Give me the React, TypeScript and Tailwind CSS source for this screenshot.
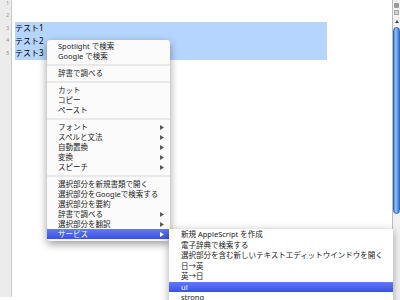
const lines = ['', '', 'テスト1', 'テスト2', 'テスト3'];

type Item = { label: string; arrow?: boolean; active?: boolean } | 'sep';

const menu: Item[] = [
  { label: 'Spotlight で検索' },
  { label: 'Google で検索' },
  'sep',
  { label: '辞書で調べる' },
  'sep',
  { label: 'カット' },
  { label: 'コピー' },
  { label: 'ペースト' },
  'sep',
  { label: 'フォント', arrow: true },
  { label: 'スペルと文法', arrow: true },
  { label: '自動置換', arrow: true },
  { label: '変換', arrow: true },
  { label: 'スピーチ', arrow: true },
  'sep',
  { label: '選択部分を新規書類で開く' },
  { label: '選択部分をGoogleで検索する' },
  { label: '選択部分を要約' },
  { label: '辞書で調べる', arrow: true },
  { label: '選択部分を翻訳', arrow: true },
  { label: 'サービス', arrow: true, active: true },
];

const services = [
  { label: '新規 AppleScript を作成' },
  { label: '電子辞典で検索する' },
  { label: '選択部分を含む新しいテキストエディットウインドウを開く' },
  { label: '日→英' },
  { label: '英→日' },
  { label: 'ul', active: true },
  { label: 'strong' },
];

function Arrow({ white }: { white?: boolean }) {
  return (
    <svg width="4" height="5" viewBox="0 0 4 5" className="shrink-0">
      <polygon points="0,0 4,2.5 0,5" fill={white ? '#ffffff' : '#5a5a5a'} />
    </svg>
  );
}

function ContextMenu() {
  return (
    <div className="absolute left-[47px] top-[40px] w-[123px] pt-[1px] pb-[2px] bg-[#fbfbfb] rounded-[3px] shadow-[0_3px_9px_rgba(0,0,0,0.4)] text-[7.5px] leading-[10px] whitespace-nowrap">
      {menu.map((item, i) =>
        item === 'sep' ? (
          <div key={i} className="h-[7px] flex items-center">
            <div className="h-[2px] w-full bg-[#e9e9e9]" />
          </div>
        ) : (
          <div
            key={i}
            className={`h-[10px] flex items-center justify-between pl-[11px] pr-[6px] ${
              item.active ? 'bg-gradient-to-b from-[#6479f3] to-[#3a4fea] text-white' : 'text-[#222]'
            }`}
          >
            <span>{item.label}</span>
            {item.arrow && <Arrow white={item.active} />}
          </div>
        )
      )}
    </div>
  );
}

function ServicesMenu() {
  return (
    <div className="absolute left-[169px] top-[229px] w-[224px] h-[80px] bg-white shadow-[0_2px_8px_rgba(0,0,0,0.35)] text-[7.5px] leading-[10px] whitespace-nowrap">
      {services.map((s, i) => (
        <div
          key={i}
          className={`h-[10.5px] flex items-center pl-[12px] ${
            s.active ? 'bg-gradient-to-b from-[#6479f3] to-[#3a4fea] text-white' : 'text-[#222]'
          }`}
        >
          {s.label}
        </div>
      ))}
    </div>
  );
}

export default function App() {
  return (
    <div className="relative w-[400px] h-[300px] overflow-hidden bg-white flex font-['Noto_Sans','Noto_Sans_CJK_JP',sans-serif]">
      {/* gutter */}
      <div className="w-[12px] h-full bg-[#ececec] border-r border-[#c9c9c9] -mt-[3px] pr-[2px]">
        {lines.map((_, i) => (
          <div key={i} className="h-[12.5px] flex items-center justify-end text-[5px] text-[#8a8a8a]">
            {i + 1}
          </div>
        ))}
      </div>

      {/* text area */}
      <div className="flex-1 h-full -mt-[3px] pl-[3px] text-[8px] text-black">
        <div className="h-[25px]" />
        <div className="w-[312px] bg-[#b6d5fe]">
          {lines.slice(2).map((l, i) => (
            <div key={i} className="h-[12.5px] flex items-center">
              {l}
            </div>
          ))}
        </div>
      </div>

      {/* scrollbar */}
      <div className="w-[8px] h-full border-l border-[#bdbdbd] bg-[#f1f1f1] flex flex-col items-center">
        <div className="h-[3px] w-full" />
        <div className="w-[5px] h-[5px] bg-[#9c9c9c] rounded-[1px]" />
        <div className="h-[2px]" />
        <div className="w-[5px] h-[5px] bg-[#cfcfcf] border border-[#aaa]" />
        <div className="h-[3px]" />
        <div className="h-[6px] flex items-center">
          <svg width="4" height="3" viewBox="0 0 4 3">
            <polygon points="0,3 2,0 4,3" fill="#444" />
          </svg>
        </div>
        <div className="h-[3px]" />
        <div className="w-[7px] h-[187px] rounded-full bg-[linear-gradient(to_right,#3f7fd9,#9cc6f5_35%,#6aa5ee_60%,#3b78d3)] border border-[#3566b8]" />
      </div>

      <ContextMenu />
      <ServicesMenu />
    </div>
  );
}
